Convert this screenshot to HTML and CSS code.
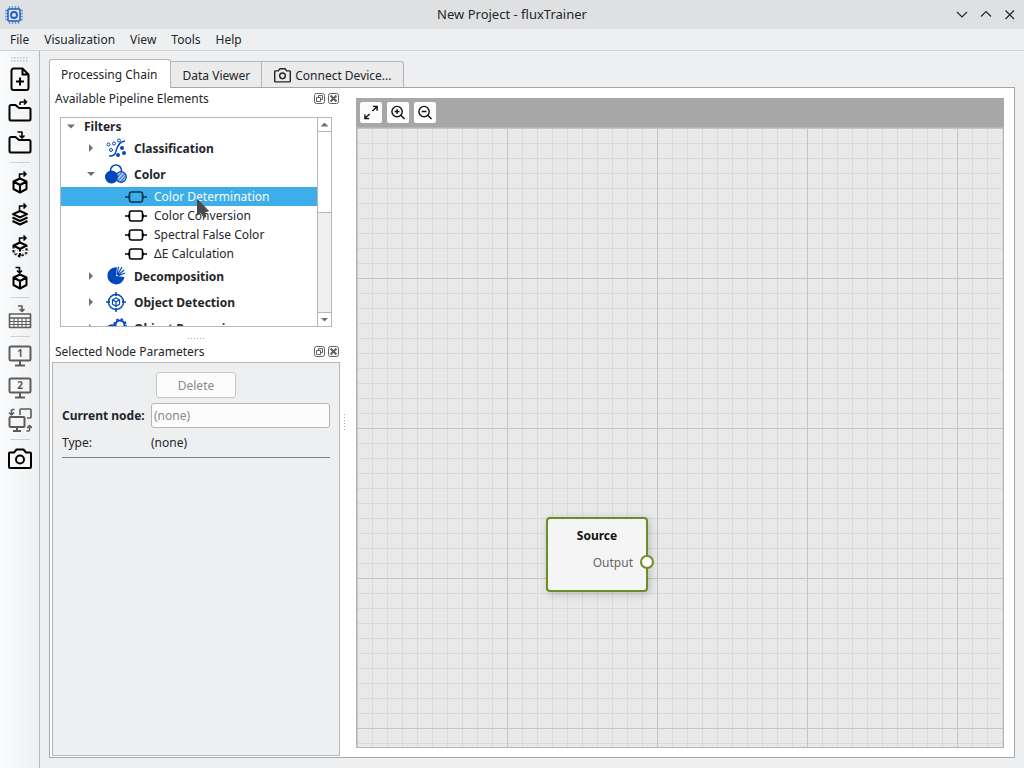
FILE: index.html
```
<!DOCTYPE html>
<html lang="en">
<head>
    <meta charset="UTF-8">
    <meta name="viewport" content="width=device-width, initial-scale=1.0">
    <title>New Project - fluxTrainer</title>
    <link rel="stylesheet" href="styles.css">
</head>
<body>

    <!-- Shared icons -->
    <svg class="sprite" aria-hidden="true">
        <symbol id="i-node" viewBox="0 0 22 12">
            <path d="M0 6h5M17 6h5" stroke-width="1.500"/>
            <rect x="4.500" y="1" width="13" height="10" rx="2"/>
            <path d="M3 4.500h2v3h-2zM17 4.500h2v3h-2z" fill="currentColor" stroke="none"/>
        </symbol>
        <symbol id="i-float" viewBox="0 0 11 11">
            <rect x=".5" y=".5" width="10" height="10" rx="2"/>
            <path d="M4.500 4.500v-2h4v4h-2M2.500 4.500h4v4h-4z"/>
        </symbol>
        <symbol id="i-close" viewBox="0 0 11 11">
            <rect x=".5" y=".5" width="10" height="10" rx="2"/>
            <path d="M2.500 2.500l6 6M8.500 2.500l-6 6" stroke-width="2"/>
        </symbol>
        <symbol id="i-camera" viewBox="0 0 24 24">
            <path d="M2 5.500h4l2.500-3h7l2.500 3h4a1 1 0 0 1 1 1v13.500a1 1 0 0 1-1 1h-20a1 1 0 0 1-1-1v-13.500a1 1 0 0 1 1-1z"/>
            <circle cx="12" cy="12.500" r="4"/>
        </symbol>
        <symbol id="i-cube" viewBox="0 0 24 24">
            <path d="M12 8.500l6.500 3v7.500l-6.500 3.500-6.500-3.500v-7.500zM5.500 11.500l6.500 3.500 6.500-3.500M12 15v7"/>
        </symbol>
    </svg>

    <header class="titlebar">
        <svg class="app-icon" viewBox="0 0 20 20">
            <path d="M5.500 1v18M8.500 1v18M11.500 1v18M14.500 1v18M1 5.500h18M1 8.500h18M1 11.500h18M1 14.500h18" stroke="#6f9ae0" stroke-width="1.300"/>
            <rect x="4" y="4" width="12" height="12" rx="1" fill="#dee0e2" stroke="#1f5fc8" stroke-width="1.500"/>
            <circle cx="10" cy="10" r="3" fill="none" stroke="#1f5fc8" stroke-width="1.800"/>
        </svg>
        <h1>New Project - fluxTrainer</h1>
        <div class="window-buttons">
            <button type="button" aria-label="Minimize"><svg viewBox="0 0 12 12"><path d="M1 3l5 5 5-5"/></svg></button>
            <button type="button" aria-label="Maximize"><svg viewBox="0 0 12 12"><path d="M1 7.500l5-5 5 5"/></svg></button>
            <button type="button" aria-label="Close"><svg viewBox="0 0 12 12"><path d="M1.500 1.500l8.500 8.500M10 1.500l-8.500 8.500"/></svg></button>
        </div>
    </header>

    <nav class="menubar">
        <button type="button">File</button>
        <button type="button">Visualization</button>
        <button type="button">View</button>
        <button type="button">Tools</button>
        <button type="button">Help</button>
    </nav>

    <div class="window">
        <aside class="toolbar">
            <div class="grip"></div>
            <button type="button" aria-label="New project">
                <svg viewBox="0 0 24 24"><path d="M5 1.500h9.500l6 6v13.500a2 2 0 0 1-2 2h-13a2 2 0 0 1-2-2v-17.500a2 2 0 0 1 2-2zM14.500 1.500v6h6M12 10.500v8M8 14.500h8"/></svg>
            </button>
            <button type="button" aria-label="Open project">
                <svg viewBox="0 0 24 24"><path d="M1.500 7.500a1.500 1.500 0 0 1 1.500-1.500h4.500l3.500 3h10a1.500 1.500 0 0 1 1.500 1.500v9.500a1.500 1.500 0 0 1-1.500 1.500h-18a1.500 1.500 0 0 1-1.500-1.500z"/><path class="thin" d="M12 6v-2a1 1 0 0 1 1-1h5.500M16 .5l2.500 2.500-2.500 2.500"/></svg>
            </button>
            <button type="button" aria-label="Save project">
                <svg viewBox="0 0 24 24"><path d="M1.500 7.500a1.500 1.500 0 0 1 1.500-1.500h4.500l3.500 3h10a1.500 1.500 0 0 1 1.500 1.500v9.500a1.500 1.500 0 0 1-1.500 1.500h-18a1.500 1.500 0 0 1-1.500-1.500z"/><path class="thin" d="M9.500 1h4.500v6M11.500 4.500l2.500 2.500 2.500-2.500"/></svg>
            </button>
            <hr>
            <button type="button" aria-label="Import cube">
                <svg viewBox="0 0 24 24"><use href="#i-cube"/><path class="thin" d="M11.500 8v-4h6M15.500 1.500l2.500 2.500-2.500 2.500"/></svg>
            </button>
            <button type="button" aria-label="Import layers">
                <svg viewBox="0 0 24 24"><path class="thin" d="M11.500 8v-4h6M15.500 1.500l2.500 2.500-2.500 2.500"/><path d="M12 9l7 3.200-7 3.200-7-3.200zM4.500 15.500l7.500 3.500 7.500-3.500M4.500 19l7.500 3.500 7.500-3.500"/></svg>
            </button>
            <button type="button" aria-label="Import reference cube">
                <svg viewBox="0 0 24 24"><path class="thin" d="M11.500 8v-4h6M15.500 1.500l2.500 2.500-2.500 2.500"/><path d="M12 8.500l6.500 3-6.500 3.500-6.500-3.500z"/><path d="M5.500 12v7l6.500 3.500 6.500-3.500v-7M12 15v7" stroke-dasharray="2.500 1.500"/><path d="M6 16.500h4M14 16.500h7M14 20h6M6 19.500h4" stroke="#999" stroke-width="1.200" stroke-dasharray="2 1"/></svg>
            </button>
            <button type="button" aria-label="Export cube">
                <svg viewBox="0 0 24 24"><use href="#i-cube"/><path class="thin" d="M7.500 1.500h4v5M9 4.500l2.500 2.500 2.500-2.500"/></svg>
            </button>
            <hr>
            <button type="button" aria-label="Export table" class="dim">
                <svg viewBox="0 0 24 24"><path class="thin" d="M10 1h4v5M11.500 4l2.500 2.500 2.500-2.500M1.500 9h21v13.500h-21zM2 13h20"/><path d="M2 16.500h20M2 19.500h20M6 13v9M10 13v9M14 13v9M18 13v9" stroke-width="1"/></svg>
            </button>
            <hr>
            <button type="button" class="dim" aria-label="Screen 1">
                <svg viewBox="0 0 24 24"><rect x="1.500" y="2.500" width="21" height="14" rx="1.500"/><path d="M12 17v4M7 21.500h10"/><text x="12" y="13">1</text></svg>
            </button>
            <button type="button" class="dim" aria-label="Screen 2">
                <svg viewBox="0 0 24 24"><rect x="1.500" y="2.500" width="21" height="14" rx="1.500"/><path d="M12 17v4M7 21.500h10"/><text x="12" y="13">2</text></svg>
            </button>
            <button type="button" class="dim" aria-label="Swap screens">
                <svg viewBox="0 0 24 24"><path class="thin" d="M12 7v-5a1 1 0 0 1 1-1h9a1 1 0 0 1 1 1v7a1 1 0 0 1-1 1h-3M6.500 1.500h-2a1 1 0 0 0-1 1v4M1 4.500l2.500 2.500 2.500-2.500M18.500 23h2a1 1 0 0 0 1-1v-4M19 20l2.500-2.500 2.500 2.500"/><path d="M1.500 10a1 1 0 0 1 1-1h13a1 1 0 0 1 1 1v8a1 1 0 0 1-1 1h-13a1 1 0 0 1-1-1zM9 19.500v3M5 23h8"/></svg>
            </button>
            <hr>
            <button type="button" aria-label="Camera"><svg><use href="#i-camera"/></svg></button>
        </aside>

        <main class="workspace">
            <div class="tabs" role="tablist">
                <button type="button" role="tab" class="tab active" aria-selected="true">Processing Chain</button>
                <button type="button" role="tab" class="tab">Data Viewer</button>
                <button type="button" role="tab" class="tab"><svg><use href="#i-camera"/></svg>Connect Device...</button>
            </div>

            <div class="pane">
                <div class="docks">
                    <section class="dock">
                        <div class="dock-title">
                            <h2>Available Pipeline Elements</h2>
                            <button type="button" aria-label="Float"><svg><use href="#i-float"/></svg></button>
                            <button type="button" aria-label="Close"><svg><use href="#i-close"/></svg></button>
                        </div>
                        <div class="tree-box">
                            <ul class="tree">
                                <li class="root"><i class="arrow open"></i>Filters</li>
                                <li class="group"><i class="arrow"></i>
                                    <svg viewBox="0 0 22 22"><path d="M4 19c8 0 6-4 8-8s3-6 8-7"/><g stroke-width="1"><circle cx="3.500" cy="7.500" r="1.500"/><circle cx="9" cy="6.500" r="1.500"/><circle cx="14" cy="3.500" r="1.500"/><circle cx="6" cy="13" r="1.500"/></g><g class="dots"><circle cx="17" cy="11" r="2"/><circle cx="19" cy="16" r="2"/><circle cx="13" cy="18" r="2"/></g></svg>
                                    Classification</li>
                                <li class="group"><i class="arrow open"></i>
                                    <svg viewBox="0 0 22 22"><circle cx="11" cy="7.500" r="5.500"/><circle cx="16" cy="14" r="5.300" fill="#a9c1ea" stroke-width="1.200"/><path d="M13 18l7-8M15.500 19l5.500-6.500M12 15l5-6" stroke-width=".8"/><circle class="dots" cx="6.500" cy="14" r="6.500"/></svg>
                                    Color</li>
                                <li class="leaf selected"><svg><use href="#i-node"/></svg>Color Determination</li>
                                <li class="leaf"><svg><use href="#i-node"/></svg>Color Conversion</li>
                                <li class="leaf"><svg><use href="#i-node"/></svg>Spectral False Color</li>
                                <li class="leaf"><svg><use href="#i-node"/></svg>ΔE Calculation</li>
                                <li class="group"><i class="arrow"></i>
                                    <svg viewBox="0 0 22 22"><path class="dots" d="M11 11L12 2.300A8.600 8.600 0 1 0 19.500 12z"/><path d="M12 10l1.500-8M12.500 10l4.500-8M13 10.500l6-5.500M13 11l7-3" stroke-width="1.200"/></svg>
                                    Decomposition</li>
                                <li class="group"><i class="arrow"></i>
                                    <svg viewBox="0 0 22 22"><circle cx="11" cy="11" r="7.500"/><path d="M11 1v4M11 17v4M1 11h4M17 11h4"/><path d="M11 7l3.500 1.800v4.400l-3.500 2-3.500-2v-4.400zM7.500 8.800l3.500 2 3.500-2M11 11v4" stroke-width="1.200"/></svg>
                                    Object Detection</li>
                                <li class="group"><i class="arrow"></i>
                                    <svg viewBox="0 0 22 22"><circle cx="15" cy="8" r="4.500" stroke-width="2"/><circle cx="15" cy="8" r="6" stroke-dasharray="2.500 2.200"/><circle class="solid" cx="7" cy="14" r="6"/></svg>
                                    Object Processing</li>
                            </ul>
                            <div class="scrollbar">
                                <button type="button" aria-label="Scroll up"><i class="up"></i></button>
                                <div class="track"><div class="thumb"></div></div>
                                <button type="button" aria-label="Scroll down"><i class="down"></i></button>
                            </div>
                            <svg class="pointer" viewBox="0 0 12 20"><path d="M.5.5v15.500l3.500-2.500 3 5 2-1-1.500-4.500 4-1z"/></svg>
                        </div>
                    </section>

                    <div class="split-h"></div>

                    <section class="dock params">
                        <div class="dock-title">
                            <h2>Selected Node Parameters</h2>
                            <button type="button" aria-label="Float"><svg><use href="#i-float"/></svg></button>
                            <button type="button" aria-label="Close"><svg><use href="#i-close"/></svg></button>
                        </div>
                        <form class="params-form">
                            <button type="button" class="delete" disabled>Delete</button>
                            <div class="field">
                                <label for="node">Current node:</label>
                                <input type="text" id="node" placeholder="(none)" disabled>
                            </div>
                            <div class="field">
                                <span>Type:</span>
                                <span>(none)</span>
                            </div>
                            <hr>
                        </form>
                    </section>
                </div>

                <div class="split-v"></div>

                <section class="editor">
                    <div class="editor-bar">
                        <button type="button" aria-label="Fit view"><svg viewBox="0 0 16 16"><path d="M9.500 6.500l5-5M10 1.500h4.500v4.500M6.500 9.500l-5 5M6 14.500h-4.500v-4.500"/></svg></button>
                        <button type="button" aria-label="Zoom in"><svg viewBox="0 0 16 16"><circle cx="7" cy="7" r="5.500"/><path d="M11 11l4 4M7 4.500v5M4.500 7h5"/></svg></button>
                        <button type="button" aria-label="Zoom out"><svg viewBox="0 0 16 16"><circle cx="7" cy="7" r="5.500"/><path d="M11 11l4 4M4.500 7h5"/></svg></button>
                    </div>
                    <div class="canvas">
                        <div class="node">
                            <strong>Source</strong>
                            <span>Output</span>
                            <i class="port"></i>
                        </div>
                    </div>
                </section>
            </div>
        </main>
    </div>

</body>
</html>
```
FILE: styles.css
```
* {
    box-sizing: border-box;
}
body {
    margin: 0;
    height: 100vh;
    display: flex;
    flex-direction: column;
    background: #eeeff1;
    color: #232629;
    font-family: "Noto Sans", sans-serif;
    font-size: 12px;
    line-height: 19px;
    overflow: hidden;
}
button {
    font: inherit;
    color: inherit;
    background: none;
    border: none;
    padding: 0;
    margin: 0;
}
h1, h2 {
    font-size: inherit;
    font-weight: normal;
    margin: 0;
}
svg {
    display: block;
    fill: none;
    stroke: currentColor;
}
.sprite {
    display: none;
}

/* Title bar and menu */
.titlebar {
    height: 29px;
    flex: none;
    display: grid;
    grid-template-columns: 1fr auto 1fr;
    align-items: center;
    padding: 0 8px;
    background: #dee0e2;
}
.titlebar h1 {
    font-size: 13px;
}
.app-icon {
    width: 20px;
    height: 20px;
    margin-left: -4px;
}
.window-buttons {
    display: flex;
    justify-content: flex-end;
    gap: 12px;
}
.window-buttons svg {
    width: 12px;
    height: 12px;
    stroke-width: 1.2;
}
.menubar {
    height: 22px;
    flex: none;
    display: flex;
    gap: 15px;
    padding: 0 10px;
    border-bottom: 1px solid #d0d1d3;
}
.window {
    flex: 1;
    display: flex;
    min-height: 0;
}

/* Left toolbar */
.toolbar {
    width: 40px;
    flex: none;
    display: flex;
    flex-direction: column;
    align-items: center;
    gap: 8px;
    padding-top: 5px;
    border-right: 1px solid #b5b6b7;
    background: linear-gradient(to right, #fbfcfd, #eeeff1);
    color: #000;
}
.grip {
    width: 18px;
    height: 6px;
    margin-bottom: -3px;
    background: conic-gradient(#ccc 25%, transparent 0) -1px 1px / 3px 3px;
}
.toolbar svg {
    width: 24px;
    height: 24px;
    stroke-width: 2;
    stroke-linejoin: round;
}
.toolbar .thin {
    stroke-width: 1.6;
}
.toolbar hr {
    width: 20px;
    height: 1px;
    margin: -1px 0;
    border: none;
    background: #d0d1d2;
}
.toolbar text {
    font-size: 10px;
    font-weight: bold;
    text-anchor: middle;
    fill: currentColor;
    stroke: none;
}
.dim {
    color: #5c5c5c;
}

/* Tabs */
.workspace {
    flex: 1;
    min-width: 0;
    display: flex;
    flex-direction: column;
    padding: 9px 9px 10px;
}
.tabs {
    height: 27px;
    display: flex;
    align-items: flex-end;
}
.tab {
    height: 26px;
    display: flex;
    align-items: center;
    gap: 4px;
    padding: 1px 11px 0 12px;
    border: 1px solid #b4b5b6;
    border-left: none;
    border-bottom: none;
    background: #ebebeb;
}
.tab:last-child {
    border-top-right-radius: 3px;
}
.tab.active {
    height: 29px;
    margin-bottom: -1px;
    padding: 0 12px 0 11px;
    border-left: 1px solid #b4b5b6;
    border-radius: 3px 3px 0 0;
    background: #fff;
    position: relative;
}
.tab svg {
    width: 17px;
    height: 17px;
    stroke-width: 2;
}
.pane {
    flex: 1;
    min-height: 0;
    display: flex;
    border: 1px solid #a6a7a8;
    background: #fff;
}

/* Docks */
.docks {
    width: 290px;
    flex: none;
    display: flex;
    flex-direction: column;
    padding: 0 0 1px 2px;
}
.dock-title {
    height: 21px;
    display: flex;
    align-items: center;
    gap: 3px;
    padding: 0 1px 0 3px;
}
.dock-title h2 {
    flex: 1;
}
.dock-title svg {
    width: 11px;
    height: 11px;
    color: #5e6062;
}
.tree-box {
    height: 210px;
    margin: 8px 8px 0;
    display: flex;
    position: relative;
    border: 1px solid #b6b7b8;
}
.tree {
    flex: 1;
    margin: 0;
    padding: 0;
    list-style: none;
    overflow: hidden;
    white-space: nowrap;
}
.tree li {
    display: flex;
    align-items: center;
}
.tree .root {
    height: 17px;
    padding-left: 6px;
    gap: 9px;
    font-weight: bold;
}
.tree .group {
    height: 26px;
    padding-left: 26px;
    gap: 7px;
    font-weight: bold;
}
.group svg {
    width: 22px;
    height: 22px;
    margin-left: 3px;
    color: #0047bb;
    stroke-width: 1.5;
}
.group .solid {
    fill: currentColor;
}
.group .dots {
    fill: currentColor;
    stroke: none;
}
.tree .leaf {
    height: 19px;
    padding-left: 64px;
    gap: 7px;
}
.leaf svg {
    width: 22px;
    height: 12px;
    color: #000;
    stroke-width: 1.6;
}
.leaf.selected {
    background: #3daee9;
    color: #fcfcfc;
}
.selected svg {
    color: #12344a;
}
.arrow {
    width: 8px;
    height: 8px;
    flex: none;
    background: #6e7072;
    clip-path: polygon(25% 0, 75% 50%, 25% 100%);
}
.arrow.open {
    clip-path: polygon(0 25%, 100% 25%, 50% 75%);
}
.scrollbar {
    width: 14px;
    display: flex;
    flex-direction: column;
    border-left: 1px solid #b6b7b8;
}
.scrollbar button {
    height: 13px;
    display: flex;
    align-items: center;
    justify-content: center;
}
.scrollbar .up, .scrollbar .down {
    width: 8px;
    height: 4px;
    background: #6e7072;
    clip-path: polygon(0 100%, 50% 0, 100% 100%);
}
.scrollbar .down {
    clip-path: polygon(0 0, 100% 0, 50% 100%);
}
.track {
    flex: 1;
    border: solid #b6b7b8;
    border-width: 1px 0;
    background: #f0f0f0;
}
.thumb {
    height: 45%;
    border-bottom: 1px solid #b6b7b8;
    background: #fff;
}
.pointer {
    position: absolute;
    left: 136px;
    top: 81px;
    width: 12px;
    height: 20px;
    fill: #4a4a4a;
    stroke: #4a4a4a;
}
.split-h {
    width: 17px;
    height: 1px;
    margin: 11px auto 2px;
    background: repeating-linear-gradient(to right, #aaa 0 1px, transparent 1px 3px);
}
.split-v {
    width: 1px;
    height: 17px;
    align-self: center;
    margin: 0 11px 0 4px;
    background: repeating-linear-gradient(to bottom, #aaa 0 1px, transparent 1px 3px);
}
.params {
    flex: 1;
    display: flex;
    flex-direction: column;
}
.params-form {
    flex: 1;
    display: flex;
    flex-direction: column;
    gap: 5px;
    padding: 9px;
    border: 1px solid #b6b7b8;
    background: #eeeff1;
}
.delete {
    width: 80px;
    height: 26px;
    align-self: center;
    border: 1px solid #c6c7c8;
    border-radius: 3px;
    background: #fcfcfc;
    color: #888a8c;
}
.field {
    display: grid;
    grid-template-columns: 89px 1fr;
    align-items: center;
}
.field label {
    font-weight: bold;
    white-space: nowrap;
}
.field input {
    width: 100%;
    height: 25px;
    padding: 0 2px;
    border: 1px solid #b4b5b6;
    border-radius: 3px;
    background: #fcfcfc;
    font: inherit;
}
.field input::placeholder {
    color: #888a8c;
}
.params-form hr {
    width: 100%;
    height: 1px;
    margin: 0;
    border: none;
    background: #7b7d7f;
}

/* Node editor */
.editor {
    flex: 1;
    min-width: 0;
    display: flex;
    flex-direction: column;
    margin: 10px 10px 9px 0;
}
.editor-bar {
    height: 29px;
    flex: none;
    display: flex;
    gap: 5px;
    padding: 4px;
    background: #a7a7a7;
}
.editor-bar button {
    width: 22px;
    height: 21px;
    padding: 3px;
    border-radius: 2px;
    background: #fcfcfc;
}
.editor-bar svg {
    width: 16px;
    height: 15px;
    color: #111;
    stroke-width: 1.5;
}
.canvas {
    flex: 1;
    position: relative;
    border: 1px solid #b4b4b4;
    background-color: #e9e9e9;
    background-image:
        linear-gradient(to right, #c4c4c4 1px, transparent 1px),
        linear-gradient(to bottom, #c4c4c4 1px, transparent 1px),
        linear-gradient(to right, #dadada 1px, transparent 1px),
        linear-gradient(to bottom, #dadada 1px, transparent 1px);
    background-size: 150px 150px, 150px 150px, 15px 15px, 15px 15px;
}
.node {
    position: absolute;
    left: 189px;
    top: 389px;
    width: 102px;
    height: 75px;
    display: flex;
    flex-direction: column;
    gap: 8px;
    padding: 7px 13px;
    border: 2px solid #6b8e23;
    border-radius: 4px;
    background: #f5f5f5;
    box-shadow: 2px 2px 8px rgba(0, 0, 0, 0.2);
    color: #111;
}
.node strong {
    text-align: center;
}
.node span {
    text-align: right;
    color: #666;
}
.port {
    position: absolute;
    right: -8px;
    top: 36px;
    width: 14px;
    height: 14px;
    border: 2px solid #6b8e23;
    border-radius: 50%;
    background: #fff;
}
```
